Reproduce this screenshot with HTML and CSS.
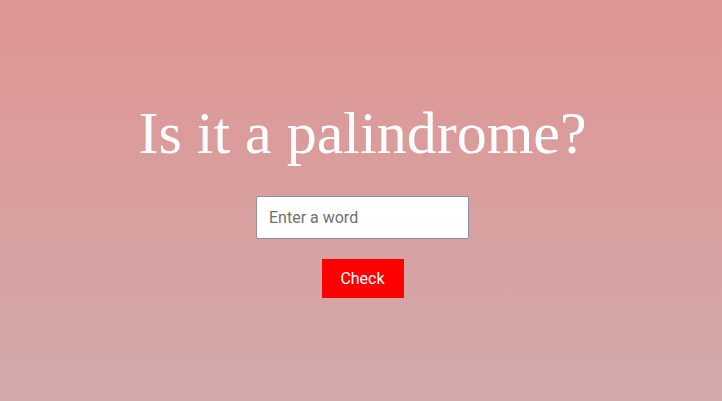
FILE: index.html
```html
<!DOCTYPE html>
<html>
<head>
<meta charset="utf-8">
<link rel="stylesheet" href="styles.css">
</head>
<body>
<main class="page">
  <h1 class="title">Is it a palindrome?</h1>
  <input class="word" type="text" placeholder="Enter a word">
  <button class="check">Check</button>
</main>
</body>
</html>
```
FILE: styles.css
```css
html, body {
  margin: 0;
  height: 100%;
}
body {
  background: linear-gradient(to bottom, #df9594, #d2a9a9);
}
.page {
  display: flex;
  flex-direction: column;
  align-items: center;
  padding-top: 96px;
  padding-left: 3px;
}
.title {
  margin: 0;
  font-family: "Liberation Serif", "Times New Roman", serif;
  font-weight: normal;
  font-size: 60px;
  line-height: 74px;
  color: #fff;
}
.word {
  margin-top: 26px;
  width: 213px;
  height: 43px;
  box-sizing: border-box;
  border: 1px solid #8e8fa5;
  border-radius: 2px;
  padding: 0 12px;
  font-family: Roboto, "DejaVu Sans", sans-serif;
  font-size: 16px;
  background: #fff;
  outline: none;
}
.word::placeholder {
  color: #6f6f6f;
}
.check {
  margin-top: 20px;
  width: 82px;
  height: 39px;
  border: none;
  background: #ff0000;
  color: #fff;
  font-family: Roboto, "DejaVu Sans", sans-serif;
  font-size: 16px;
  padding: 0;
}
```
